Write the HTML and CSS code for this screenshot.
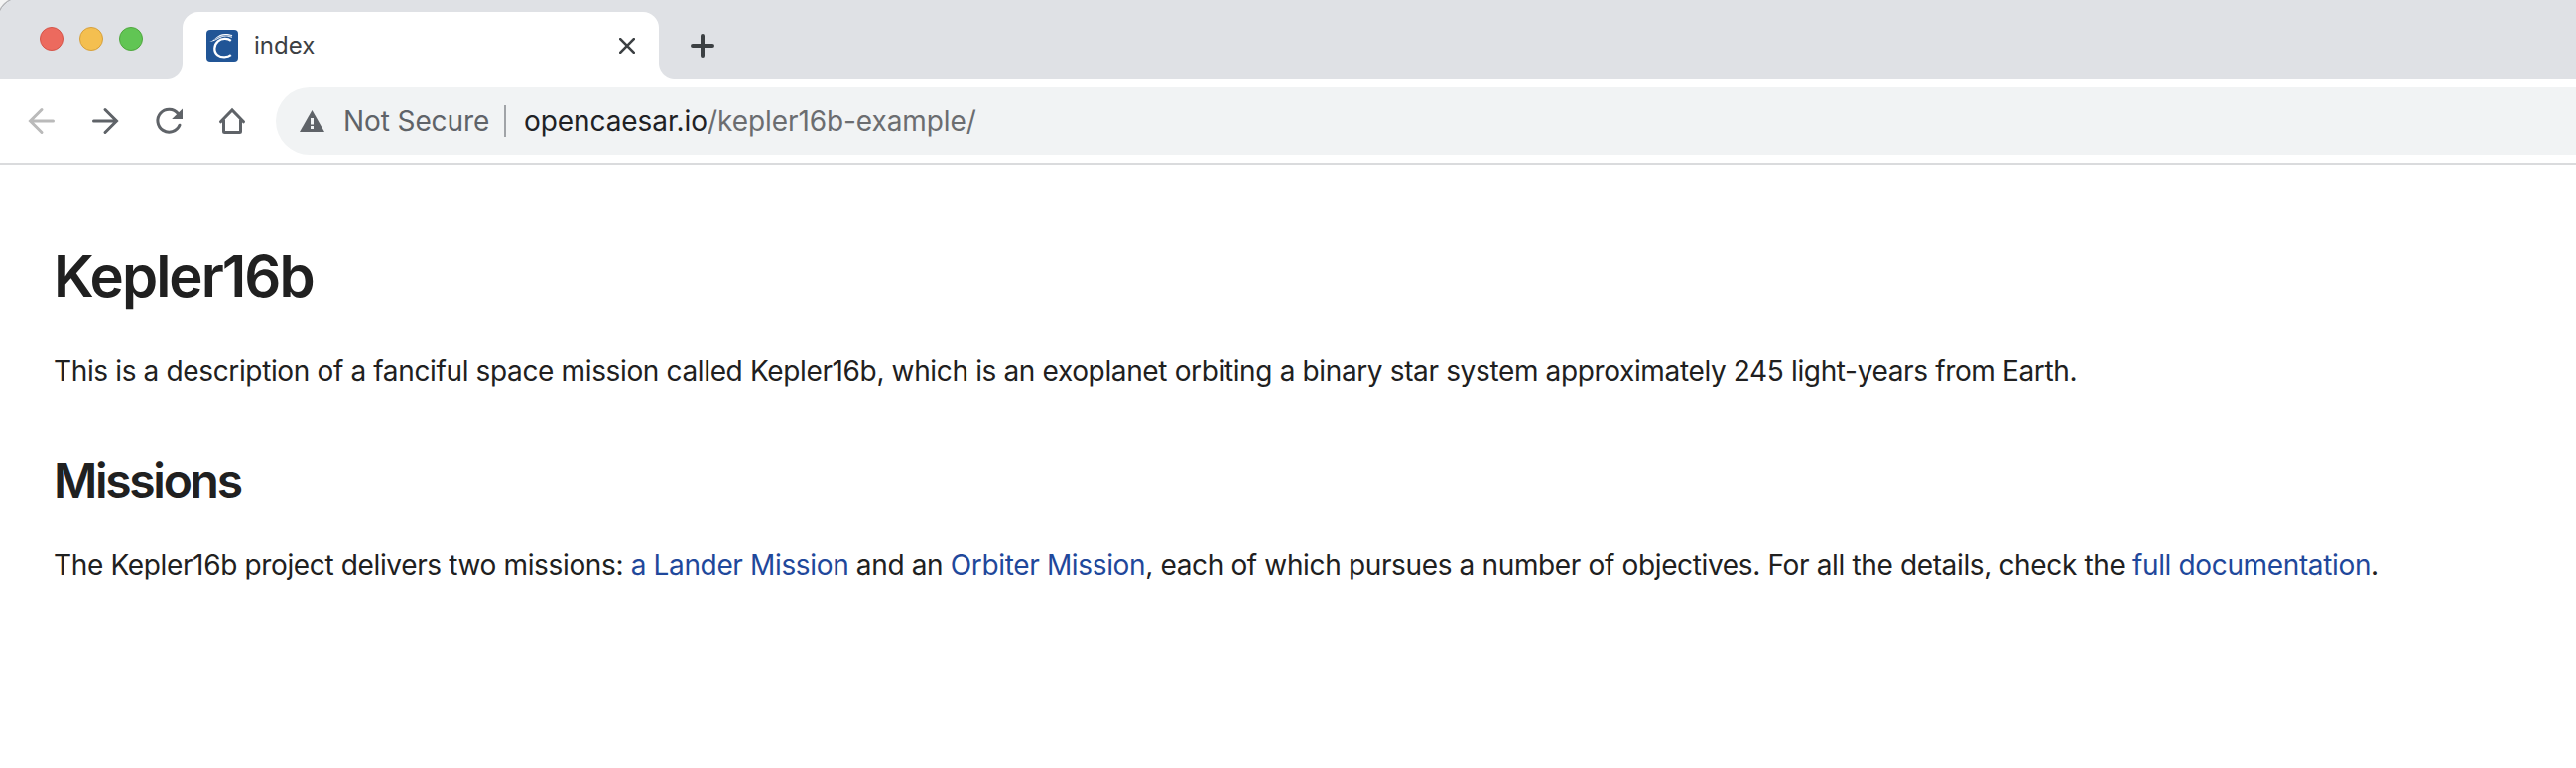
FILE: index.html
```html
<!DOCTYPE html>
<html lang="en">
<head>
<meta charset="utf-8">
<title>index</title>
<link rel="stylesheet" href="styles.css">
</head>
<body>
<header class="tabstrip">
  <div class="lights"><span class="light red"></span><span class="light yellow"></span><span class="light green"></span></div>
  <div class="tab">
    <svg class="favicon" viewBox="0 0 32 32" width="32" height="32"><rect width="32" height="32" rx="4" fill="#215596"/><path d="M24.800 10.800C21.500 8.200 15.500 8.300 11.800 11.300C7.500 15 7 22 11.300 25.300C15 28.300 21.500 28 24.800 25.200" fill="none" stroke="#fff" stroke-width="2.300"/><path d="M3.200 11.800C9 11 10.500 4 19 4C22 4 24 4.600 26.200 5L25.600 8C22.500 6.300 18.500 6 15.500 7.200C11.500 8.800 8.500 11.500 3.200 11.800Z" fill="#fff"/><path d="M8 10C12 7 16 5.300 20 5.500C22 5.600 24 6 26 6.500" fill="none" stroke="#215596" stroke-width=".6"/></svg>
    <span class="tab-title">index</span>
    <svg class="close" viewBox="0 0 16 16" width="16" height="16"><path d="M1.200 1.200L14.800 14.800M14.800 1.200L1.200 14.800" stroke="#3c4043" stroke-width="2.600" stroke-linecap="round"/></svg>
  </div>
  <svg class="plus" viewBox="0 0 24 24" width="24" height="24"><path d="M12 2V22M2 12H22" stroke="#3c4043" stroke-width="4" stroke-linecap="round"/></svg>
</header>
<nav class="toolbar">
  <svg class="nav-icon" viewBox="0 0 28 28" width="28" height="28"><path d="M25.500 14H3M14 2.500L2.500 14L14 25.500" fill="none" stroke="#bababa" stroke-width="3" stroke-linecap="round"/></svg>
  <svg class="nav-icon" viewBox="0 0 28 28" width="28" height="28"><path d="M2.500 14H25M14 2.500L25.500 14L14 25.500" fill="none" stroke="#5f6368" stroke-width="3" stroke-linecap="round"/></svg>
  <svg class="nav-icon" viewBox="0 0 28 28" width="28" height="28"><path d="M23.400 6.500A11.500 11.500 0 1 0 25 18.200" fill="none" stroke="#5f6368" stroke-width="3" stroke-linecap="round"/><path d="M28 1.500V12H17.200Z" fill="#5f6368"/></svg>
  <svg class="nav-icon" viewBox="0 0 28 28" width="28" height="28"><path d="M2.500 14.800L14 3L25.500 14.800" fill="none" stroke="#5f6368" stroke-width="3" stroke-linecap="round"/><path d="M5.500 12.500V24.500Q5.500 25.500 6.500 25.500H21.500Q22.500 25.500 22.500 24.500V12.500" fill="none" stroke="#5f6368" stroke-width="3"/></svg>
  <div class="omnibox">
    <svg class="warning" viewBox="0 0 25 22" width="25" height="22"><path d="M12.500 0L25 22H0Z" fill="#5f6368"/><path d="M11 8H14V14.500H11ZM11 16H14V19H11Z" fill="#f1f3f4"/></svg>
    <span class="security">Not Secure</span>
    <span class="divider"></span>
    <span class="url"><span class="host">opencaesar.io</span><span class="path">/kepler16b-example/</span></span>
  </div>
</nav>
<main class="page">
  <h1 class="title">Kepler16b</h1>
  <p class="text intro">This is a description of a fanciful space mission called Kepler16b, which is an exoplanet orbiting a binary star system approximately 245 light-years from Earth.</p>
  <h2 class="heading">Missions</h2>
  <p class="text details">The Kepler16b project delivers two missions: <a class="link" href="#">a Lander Mission</a> and an <a class="link" href="#">Orbiter Mission</a>, each of which pursues a number of objectives. For all the details, check the <a class="link" href="#">full documentation</a>.</p>
</main>
</body>
</html>
```
FILE: styles.css
```css
* { box-sizing: border-box; }
body { margin: 0; height: 774px; overflow: hidden; background: #fff; color: #202020; font-family: Inter, "Liberation Sans", sans-serif; }
svg { display: block; flex: none; }
.tabstrip { display: flex; height: 80px; padding-left: 40px; background: radial-gradient(circle at 20px 20px, #dfe1e5 21.5px, #b4b5b8 22px, #b4b5b8 22.500px, #f4f4f4 23.500px) 0 0 / 20px 20px no-repeat, #dfe1e5; }
.lights { display: flex; gap: 16px; width: 144px; padding-top: 27px; }
.light { width: 24px; height: 24px; border-radius: 50%; border: 1px solid; }
.red { background: #ec6a5e; border-color: #d5554a; }
.yellow { background: #f4bf50; border-color: #d6a03d; }
.green { background: #61c554; border-color: #50a73f; }
.tab { position: relative; display: flex; align-items: center; width: 480px; height: 68px; margin-top: 12px; padding: 0 24px; border-radius: 16px 16px 0 0; background: #fff; }
.tab::before, .tab::after { content: ""; position: absolute; bottom: 0; width: 16px; height: 16px; }
.tab::before { left: -16px; background: radial-gradient(circle at 0 0, transparent 15.5px, #fff 16.5px); }
.tab::after { right: -16px; background: radial-gradient(circle at 100% 0, transparent 15.5px, #fff 16.5px); }
.tab-title { margin-left: 16px; font-size: 24px; line-height: 32px; color: #3c4043; }
.close { margin-left: auto; }
.plus { margin: 34px 0 0 32px; }
.toolbar { display: flex; align-items: center; height: 86px; padding-left: 28px; border-bottom: 2px solid #dadbdd; }
.nav-icon { margin-right: 36px; }
.omnibox { display: flex; align-items: center; flex: 1; height: 68px; margin-left: -6px; padding-left: 24px; border-radius: 34px 0 0 34px; background: #f1f3f4; font-size: 28px; line-height: 40px; white-space: nowrap; }
.security { width: 162px; margin-left: 19px; letter-spacing: -0.1px; color: #5f6368; }
.divider { width: 2px; height: 32px; background: #a0a3a7; }
.url { margin-left: 18px; letter-spacing: -0.08px; }
.host { color: #202124; }
.path { color: #6b6d70; }
.page { padding: 76px 54px 0; }
.title { margin: 0; font-size: 58px; line-height: 72px; font-weight: 600; letter-spacing: -1.95px; }
.heading { margin: 61px 0 0; font-size: 48px; line-height: 60px; font-weight: 600; letter-spacing: -2.3px; }
.text { margin: 0; font-size: 28px; line-height: 40px; white-space: nowrap; letter-spacing: -0.36px; }
.intro { margin-top: 40px; }
.details { margin-top: 34px; letter-spacing: -0.355px; }
.link { color: #1f489b; text-decoration: none; }
```
